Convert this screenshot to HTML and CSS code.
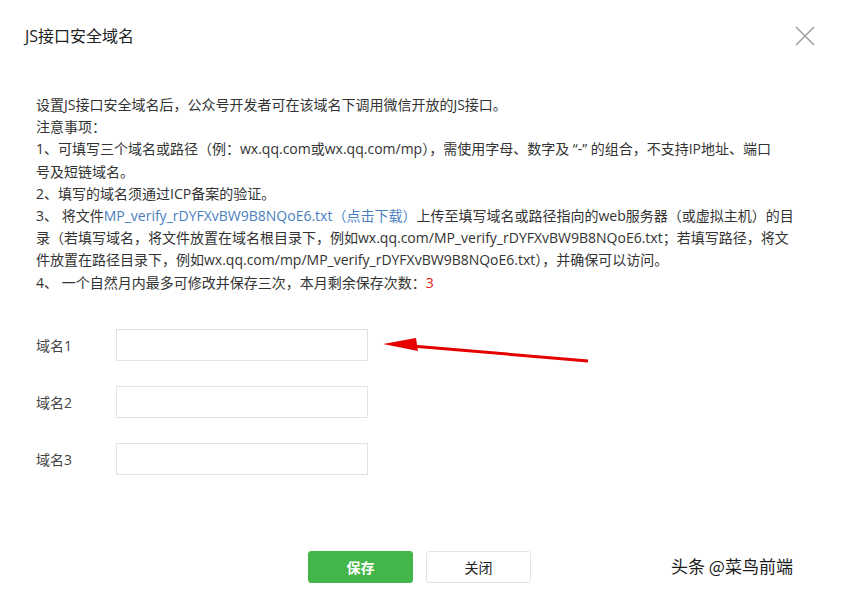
FILE: index.html
```html
<!DOCTYPE html>
<html lang="zh-CN">
<head>
    <meta charset="UTF-8">
    <meta name="viewport" content="width=device-width, initial-scale=1.0">
    <title>JS接口安全域名</title>
    <link rel="stylesheet" href="styles.css">
</head>
<body>
    <div class="dialog">
        <div class="dialog-head">
            <h3>JS接口安全域名</h3>
            <button class="close" type="button" aria-label="关闭">
                <svg width="20" height="20" viewBox="0 0 20 20">
                    <path d="M1 1 L19 19 M19 1 L1 19" stroke="#9a9a9a" stroke-width="1.4" fill="none"/>
                </svg>
            </button>
        </div>
        <div class="dialog-body">
            <div class="tips">
                <p>设置JS接口安全域名后，公众号开发者可在该域名下调用微信开放的JS接口。</p>
                <p>注意事项：</p>
                <p>1、可填写三个域名或路径（例：wx.qq.com或wx.qq.com/mp），需使用字母、数字及 “-” 的组合，不支持IP地址、端口<br>号及短链域名。</p>
                <p>2、填写的域名须通过ICP备案的验证。</p>
                <p>3、 将文件<a href="#">MP_verify_rDYFXvBW9B8NQoE6.txt（点击下载）</a>上传至填写域名或路径指向的web服务器（或虚拟主机）的目<br>录（若填写域名，将文件放置在域名根目录下，例如wx.qq.com/MP_verify_rDYFXvBW9B8NQoE6.txt；若填写路径，将文<br>件放置在路径目录下，例如wx.qq.com/mp/MP_verify_rDYFXvBW9B8NQoE6.txt），并确保可以访问。</p>
                <p>4、 一个自然月内最多可修改并保存三次，本月剩余保存次数：<span class="count">3</span></p>
            </div>
            <form class="domain-form">
                <div class="form-row">
                    <label>域名1</label>
                    <input type="text">
                </div>
                <div class="form-row">
                    <label>域名2</label>
                    <input type="text">
                </div>
                <div class="form-row">
                    <label>域名3</label>
                    <input type="text">
                </div>
            </form>
        </div>
        <div class="dialog-foot">
            <button type="button" class="btn btn-primary">保存</button>
            <button type="button" class="btn btn-default">关闭</button>
        </div>
        <svg class="arrow" width="845" height="616" viewBox="0 0 845 616">
            <path d="M412 346 L588 361" stroke="#e60000" stroke-width="3" fill="none"/>
            <path d="M383 344 L416 338 L418 351 Z" fill="#e60000"/>
        </svg>
        <div class="watermark">头条 @菜鸟前端</div>
    </div>
</body>
</html>
```

FILE: styles.css
```css
* {
    box-sizing: border-box;
}
body {
    margin: 0;
    background: #fff;
    font-family: "Open Sans", "Noto Sans CJK SC", sans-serif;
    color: #333;
}
.dialog {
    position: relative;
    width: 845px;
    height: 616px;
}
.dialog-head {
    display: flex;
    justify-content: space-between;
    align-items: center;
    padding: 24px 30px 0 25px;
}
.dialog-head h3 {
    margin: 0;
    font-size: 16px;
    font-weight: normal;
    line-height: 24px;
    color: #222;
}
.close {
    border: none;
    background: none;
    padding: 0;
    width: 20px;
    height: 20px;
    cursor: pointer;
}
.dialog-body {
    padding: 46px 20px 0 36px;
}
.tips {
    font-size: 14px;
    line-height: 22.2px;
    color: #333;
    white-space: nowrap;
}
.tips p {
    margin: 0;
}
.tips a {
    color: #4a7fc1;
    text-decoration: none;
}
.count {
    color: #e02020;
}
.domain-form {
    margin-top: 35px;
}
.form-row {
    display: flex;
    align-items: center;
    margin-bottom: 25px;
}
.form-row label {
    width: 80px;
    font-size: 14px;
    color: #444;
}
.form-row input {
    width: 252px;
    height: 32px;
    border: 1px solid #e3e3e3;
    padding: 0 8px;
    font-size: 14px;
    outline: none;
}
.dialog-foot {
    display: flex;
    justify-content: center;
    gap: 13px;
    padding-top: 51px;
    padding-right: 6px;
}
.btn {
    width: 105px;
    height: 32px;
    border-radius: 3px;
    font-size: 14px;
    font-family: "Open Sans", "Noto Sans CJK SC", sans-serif;
    cursor: pointer;
}
.btn-primary {
    background: #44b549;
    border: 1px solid #44b549;
    color: #fff;
    font-weight: bold;
}
.btn-default {
    background: #fff;
    border: 1px solid #e3e3e3;
    color: #222;
}
.arrow {
    position: absolute;
    left: 0;
    top: 0;
    pointer-events: none;
}
.watermark {
    position: absolute;
    left: 671px;
    top: 553px;
    font-size: 17px;
    color: #1a1a1a;
    font-family: "Noto Sans CJK SC", sans-serif;
    text-shadow: 0 0 2px #fff, 0 0 2px #fff;
}
```
